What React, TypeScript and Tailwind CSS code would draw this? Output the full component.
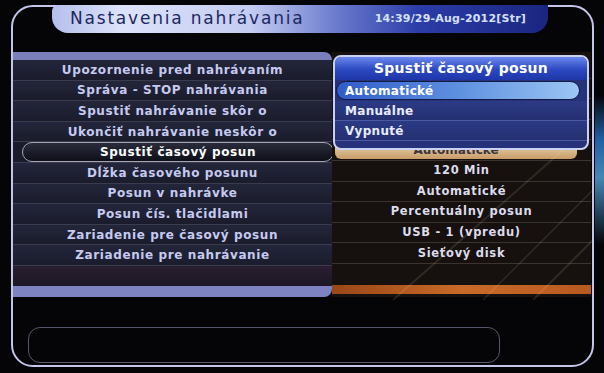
import React from "react"

const labels = [
  "Upozornenie pred nahrávaním",
  "Správa - STOP nahrávania",
  "Spustiť nahrávanie skôr o",
  "Ukončiť nahrávanie neskôr o",
  "Spustiť časový posun",
  "Dĺžka časového posunu",
  "Posun v nahrávke",
  "Posun čís. tlačidlami",
  "Zariadenie pre časový posun",
  "Zariadenie pre nahrávanie",
]

const values = ["", "", "", "", "Automatické", "120 Min", "Automatické", "Percentuálny posun", "USB - 1 (vpredu)", "Sieťový disk"]

const font = { fontFamily: '"DejaVu Sans", Verdana, sans-serif' }

export default function App() {
  return (
    <div className="relative w-[604px] h-[373px] bg-[#050407] overflow-hidden pt-[5px] pl-[11px]" style={font}>
      {/* outer frame */}
      <div className="w-[583px] h-[362px] rounded-[22px] border-2 border-[#c3c6ea] flex flex-col">
        {/* title tab */}
        <div className="ml-[39px] -mt-[2px] w-[496px] h-[28px] rounded-b-[16px] rounded-tl-[6px] flex items-center bg-[linear-gradient(90deg,#b4bfec_0%,#dde3fa_14%,#c4ccf2_40%,#6878cc_58%,#2c3ca8_74%,#1a2680_100%)]">
          <span className="pl-[18px] text-[17px] tracking-[1.8px] text-[#1c2860]">Nastavenia nahrávania</span>
          <span className="ml-auto pr-[22px] text-[11px] tracking-[0.2px] font-bold text-[#d4e0ff]">14:39/29-Aug-2012[Str]</span>
        </div>

        {/* panels */}
        <div className="mt-[19px] flex">
          {/* left: labels */}
          <div className="w-[319px] flex flex-col">
            <div className="h-[8px] bg-[#7a7fb9] rounded-tr-[10px]" />
            {labels.map((l, i) =>
              i === 4 ? (
                <div key={l} className="h-[20.6px] flex items-center bg-[#1a1c2c] border-b border-[#3a3c4e]">
                  <div className="ml-[9px] mr-[-2px] flex-1 h-[20px] rounded-full border border-[#a4a4b4] bg-[linear-gradient(180deg,#2a2c3c,#0e0f18)] flex items-center justify-center text-[12px] font-bold tracking-[0.6px] text-white">
                    {l}
                  </div>
                </div>
              ) : (
                <div key={l} className="h-[20.6px] flex items-center justify-center bg-[linear-gradient(180deg,#23263a,#1a1c2c)] border-b border-[#3a3c4e] text-[12px] font-bold tracking-[0.6px] text-[#c6caf0]">
                  {l}
                </div>
              )
            )}
            <div className="h-[20px] bg-[linear-gradient(180deg,#2a1f30,#1c1624)]" />
            <div className="h-[11px] bg-[#7d82c0] rounded-br-[8px]" />
          </div>

          {/* right: values */}
          <div className="w-[259px] flex flex-col bg-[#16110f]">
            <div className="h-[6px]" />
            {values.map((v, i) =>
              i === 4 ? (
                <div key={i} className="h-[20.6px] flex items-center border-b border-[#3a332e]">
                  <div className="ml-[3px] mr-[14px] flex-1 h-[18px] rounded-[6px] bg-[linear-gradient(180deg,#efdcb8,#c89c68)] flex items-center justify-center text-[12px] font-bold text-[#3c3440]">
                    {v}
                  </div>
                </div>
              ) : (
                <div key={i} className="h-[20.6px] flex items-center justify-center border-b border-[#3a332e] text-[11.5px] font-bold tracking-[0.7px] text-[#dcdcec]">
                  {v}
                </div>
              )
            )}
            <div className="h-[21px]" />
            <div className="h-[9px] bg-[linear-gradient(90deg,#9a4618,#c86a28_50%,#b85a20)]" />
          </div>
        </div>

        {/* help box */}
        <div className="mt-[30px] ml-[15px] w-[472px] h-[36px] rounded-[12px] border border-[#55576c]" />
      </div>

      {/* diagonal light streaks over right panel */}
      <svg className="absolute left-[333px] top-[150px] pointer-events-none" width="260" height="150">
        <line x1="60" y1="150" x2="230" y2="0" stroke="#ffe0b0" strokeOpacity="0.12" strokeWidth="2" />
        <line x1="150" y1="150" x2="260" y2="40" stroke="#ffffff" strokeOpacity="0.1" strokeWidth="1.5" />
        <line x1="200" y1="150" x2="260" y2="90" stroke="#ffe0b0" strokeOpacity="0.12" strokeWidth="2" />
      </svg>

      {/* blue glow outside frame */}
      <div className="absolute left-[595px] top-[95px] w-[9px] h-[150px] bg-[linear-gradient(180deg,transparent,#2a8ae8_30%,#60c0ff_55%,transparent)] opacity-70" />

      {/* popup */}
      <div className="absolute left-[333px] top-[55px] w-[256px] h-[95px] rounded-[8px] border-2 border-[#c9d1f2] bg-[#26327a] overflow-hidden flex flex-col">
        <div className="h-[23px] shrink-0 bg-[linear-gradient(180deg,#6a88ee,#2c48c0_55%,#1e36a8)] flex items-center justify-center text-[14px] tracking-[0.3px] font-bold text-white">
          Spustiť časový posun
        </div>
        <div className="h-[21px] shrink-0 flex items-center px-[1px]">
          <div className="w-[244px] h-[19px] rounded-full border border-[#141a48] bg-[linear-gradient(90deg,#2f5cc8,#5e90e0_50%,#9cc6f4)] flex items-center pl-[8px] text-[12px] tracking-[0.3px] font-bold text-white">
            Automatické
          </div>
        </div>
        <div className="h-[20px] shrink-0 flex items-center pl-[10px] border-b border-[#4a5aa0] bg-[linear-gradient(180deg,#2c3a86,#243070)] text-[12px] tracking-[0.3px] font-bold text-[#e8ecff]">
          Manuálne
        </div>
        <div className="h-[20px] shrink-0 flex items-center pl-[10px] border-b border-[#4a5aa0] bg-[linear-gradient(180deg,#2c3a86,#243070)] text-[12px] tracking-[0.3px] font-bold text-[#e8ecff]">
          Vypnuté
        </div>
      </div>
    </div>
  )
}
